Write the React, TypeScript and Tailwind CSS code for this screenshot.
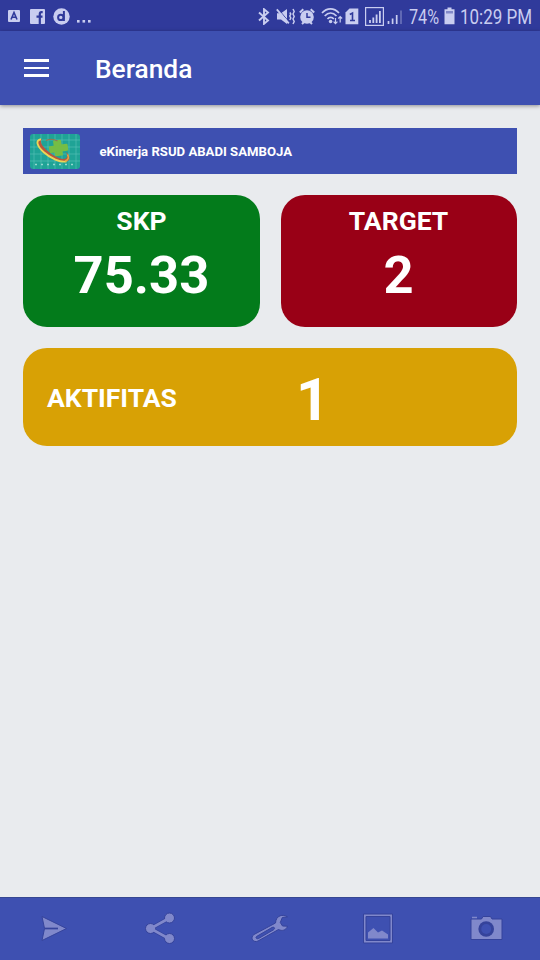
import type { ReactNode } from "react";

interface StatCardProps {
  title: string;
  value: string;
  className: string;
}

function StatCard({ title, value, className }: StatCardProps) {
  return (
    <div
      className={`flex h-[132px] flex-1 flex-col items-center rounded-[24px] pt-[10px] font-bold text-white ${className}`}
    >
      <h2 className="text-[26.5px] leading-[32px]">{title}</h2>
      <p className="mt-[6px] text-[52.5px] leading-[64px]">{value}</p>
    </div>
  );
}

function StatusBar() {
  return (
    <div className="flex h-[31px] shrink-0 items-center bg-[#303a9b] pl-2 pt-px text-[#c9cdf0]">
      {/* Notifications */}
      <svg width="12" height="14" viewBox="0 0 12 14" className="shrink-0">
        <rect y="1" width="12" height="12" rx="1" fill="currentColor" />
        <path d="M3 10.5 6 3.5l3 7M4.2 8.3h3.6" fill="none" stroke="#303a9b" strokeWidth="1.6" />
      </svg>
      <svg width="15" height="15" viewBox="0 0 15 15" className="ml-[10px] shrink-0">
        <rect width="15" height="15" rx="1" fill="currentColor" />
        <path d="M12.7 3.2h-1.2c-1.2 0-1.7.6-1.7 1.8V15M6.5 7.6h6" fill="none" stroke="#303a9b" strokeWidth="2.2" />
      </svg>
      <svg width="17" height="17" viewBox="0 0 17 17" className="ml-2 shrink-0">
        <circle cx="8.5" cy="8.5" r="8.2" fill="currentColor" />
        <circle cx="7.8" cy="9.4" r="2.7" fill="none" stroke="#303a9b" strokeWidth="2" />
        <path d="M10.9 3v10" stroke="#303a9b" strokeWidth="2" />
      </svg>
      <svg width="15" height="14" viewBox="0 0 15 14" className="ml-[6px] shrink-0" fill="currentColor">
        <rect x="1" y="11" width="2.6" height="2.6" />
        <rect x="6.5" y="11" width="2.6" height="2.6" />
        <rect x="12" y="11" width="2.6" height="2.6" />
      </svg>

      {/* Bluetooth */}
      <svg width="12" height="17" viewBox="0 0 12 17" className="ml-[167px] shrink-0">
        <path d="m1 4.5 9 8-4 3.3V1.2l4 3.3-9 8" fill="none" stroke="currentColor" strokeWidth="1.9" />
      </svg>
      {/* Vibrate */}
      <svg width="19" height="17" viewBox="0 0 19 17" className="ml-[6px] shrink-0">
        <path d="M1 5.2h4L11 1v15l-6-4.5H1z" fill="currentColor" />
        <path d="m2 .8 11 13" stroke="#303a9b" strokeWidth="1" />
        <path d="m.8 1.3 12 14" stroke="currentColor" strokeWidth="1.8" />
        <path
          d="m13.8 4.5 1 1.5-1 2 1 2-1 2M17 1l1.2 2.5L17 6l1.2 2.5L17 11l1.2 2.5L17 16"
          fill="none"
          stroke="currentColor"
          strokeWidth="1.5"
        />
      </svg>
      {/* Alarm */}
      <svg width="16" height="17" viewBox="0 0 16 17" className="ml-1 shrink-0">
        <path d="M.8 4.5 4.3 1.3M15.2 4.5l-3.500-3.200M3 16l2-2m8 2-2-2" stroke="currentColor" strokeWidth="2" />
        <circle cx="8" cy="9" r="6.8" fill="currentColor" />
        <path d="M8 5v4.3h3.5" fill="none" stroke="#303a9b" strokeWidth="1.5" />
      </svg>
      {/* Wifi */}
      <svg width="22" height="18" viewBox="0 0 22 18" className="ml-[6px] shrink-0">
        <g fill="none" stroke="currentColor" strokeWidth="1.7">
          <path d="M1 6c5-5.600 12-5.600 17 0M3.700 9c3.600-4 8.200-4 11.800 0M6.500 12c1.800-2.300 4.500-2.300 6.300 0" />
        </g>
        <circle cx="9.600" cy="14.500" r="1.800" fill="currentColor" />
        <path
          d="M14.500 11v5.500m-1.900-1.900 1.900 2 1.900-2M19.200 15.500V9.500m-1.900 2 1.900-2 1.900 2"
          fill="none"
          stroke="currentColor"
          strokeWidth="1.2"
        />
      </svg>
      {/* SIM */}
      <svg width="14" height="17" viewBox="0 0 14 17" className="ml-[2px] shrink-0">
        <path d="M4.500.5h8.800v15.800H.500V4.500z" fill="currentColor" />
        <path d="M4.800 6.500 7.500 5v8M5 12.500h5" fill="none" stroke="#303a9b" strokeWidth="1.6" />
      </svg>
      {/* Signal strength */}
      <svg width="19" height="19" viewBox="0 0 19 19" className="ml-[6px] shrink-0">
        <rect x=".6" y=".6" width="17.8" height="17.8" fill="none" stroke="currentColor" strokeWidth="1.2" />
        <path d="M5 13v3M8.300 10.500V16M11.600 7.500V16M14.900 4v12" stroke="currentColor" strokeWidth="1.8" />
      </svg>
      <svg width="16" height="17" viewBox="0 0 16 17" className="ml-[3px] shrink-0">
        <path d="M1.500 13v3M5.600 10.500V16M9.700 7v9" stroke="currentColor" strokeWidth="1.7" />
        <path d="M14 2.500V16" stroke="#7078bd" strokeWidth="1.5" />
      </svg>

      <span className="ml-[6px] w-[31px] shrink-0 whitespace-nowrap pt-[2px] text-[20px] leading-none">
        <span className="inline-block origin-left scale-x-[0.81]">74%</span>
      </span>
      <svg width="11" height="18" viewBox="0 0 11 18" className="ml-[4px] shrink-0">
        <path d="M3.500.500h4v1.700h3v15H.500v-15h3z" fill="currentColor" />
        <path d="M2 4h7v2.500H2z" fill="#8289c8" />
      </svg>
      <span className="ml-[5px] w-[72px] shrink-0 whitespace-nowrap pt-[2px] text-[20px] leading-none">
        <span className="inline-block origin-left scale-x-[0.85]">10:29 PM</span>
      </span>
    </div>
  );
}

function HospitalLogo() {
  return (
    <svg width="50" height="35" viewBox="0 0 50 35">
      <defs>
        <clipPath id="logo-frame">
          <rect width="50" height="35" rx="3" />
        </clipPath>
      </defs>
      <g clipPath="url(#logo-frame)">
        <rect width="50" height="35" fill="#1fa396" />
        <path
          d="M4 0v35M11 0v35M18 0v35M25 0v35M32 0v35M39 0v35M46 0v35M0 6h50M0 13h50M0 20h50M0 27h50"
          stroke="#5cc5bb"
          strokeWidth=".6"
        />
        <path
          d="M25 7h6v5h6v5h-6v4h-6v-4h-5v-5h5z"
          fill="#75bd45"
          stroke="#75bd45"
          strokeWidth="2"
          strokeLinejoin="round"
          transform="rotate(-8 28 14)"
        />
        <path d="M16 6.500c4-1.500 8-1.300 11.500.500" fill="none" stroke="#8c7954" strokeWidth="1.3" />
        {/* Orbit around the cross */}
        <path
          d="M12 5C5 5 6 11 13 18s18 11.500 24 9.500c4-1.500 3-6-1-9.500 2 4 1.500 7-2.500 7C28 25 19 19 14.500 14 11 10 10 7 12 5z"
          fill="#b9553b"
        />
        <path
          d="M11 5.200C5 6 7 12 13.500 18S31 29 36.500 27.300"
          fill="none"
          stroke="#ead657"
          strokeWidth="1.9"
        />
        <path d="M35 27c4-1 4-4 2.500-6.500" fill="none" stroke="#e0a745" strokeWidth="1.5" />
        <path d="M5 30.500h40" stroke="#94d8d0" strokeWidth="1.5" strokeDasharray="2 4" />
      </g>
    </svg>
  );
}

function NavButton({ label, children }: { label: string; children: ReactNode }) {
  return (
    <button aria-label={label} className="flex flex-1 items-center justify-center">
      <svg
        width="34"
        height="34"
        viewBox="0 0 34 34"
        fill="#8088cb"
        stroke="#35439b"
        strokeWidth="1"
        className="overflow-visible"
      >
        {children}
      </svg>
    </button>
  );
}

export default function App() {
  return (
    <div className="flex h-screen flex-col overflow-hidden bg-[#e9ebee] font-[Roboto,sans-serif]">
      <StatusBar />

      <header className="flex h-[74px] shrink-0 items-center bg-[#3e50b1] pl-6 shadow-[0_1px_4px_rgba(0,0,0,0.4)]">
        <button aria-label="Menu" className="flex flex-col gap-[5px]">
          <span className="h-[2.5px] w-[25px] bg-white" />
          <span className="h-[2.5px] w-[25px] bg-white" />
          <span className="h-[2.5px] w-[25px] bg-white" />
        </button>
        <h1 className="ml-[46px] mt-[3px] text-[26.3px] font-medium leading-none text-white">Beranda</h1>
      </header>

      <main className="flex flex-1 flex-col px-[23.4px] pt-[23.4px]">
        <div className="flex h-[46px] items-center bg-[#3e50b1] pl-[6.6px]">
          <HospitalLogo />
          <p className="ml-[19.5px] text-[13.15px] font-bold text-white">eKinerja RSUD ABADI SAMBOJA</p>
        </div>

        <div className="mt-[21px] flex gap-[21px]">
          <StatCard title="SKP" value="75.33" className="bg-[#037b1b]" />
          <StatCard title="TARGET" value="2" className="bg-[#990016]" />
        </div>

        <div className="mt-[21px] flex h-[98px] items-center rounded-[24px] bg-[#d8a105] pl-[23.6px] font-bold text-white">
          <h2 className="w-[249px] pt-[1px] text-[26.5px] leading-[32px]">AKTIFITAS</h2>
          <p className="pt-[6px] text-[58.5px] leading-[64px]">1</p>
        </div>
      </main>

      {/* Bottom navigation */}
      <nav className="flex h-[63px] shrink-0 border-t border-[#364792] bg-[#3e50b1]">
        <NavButton label="Kirim">
          <path d="M5 4.500 29.500 16.500 5 28.500 7.500 16.500z" />
          <path d="M7.500 16.500H21" stroke="#35439b" strokeWidth="1.7" />
        </NavButton>
        <NavButton label="Bagikan">
          <path d="M24.500 6 5.500 16.500l19 10.500" fill="none" stroke="#35439b" strokeWidth="4.2" />
          <circle cx="24.5" cy="6" r="5" />
          <circle cx="5.5" cy="16.5" r="5" />
          <circle cx="24.5" cy="26.5" r="5" />
          <path d="M24.500 6 5.500 16.500l19 10.500" fill="none" stroke="#8088cb" strokeWidth="2.6" />
        </NavButton>
        <NavButton label="Pengaturan">
          <path
            fillRule="evenodd"
            d="M34.500 4.800C30 2 23 3 22.500 11L1 22.500c-4.500 3-.500 9 4 6.500l20.500-11.500c3.500 1.800 7.500 1 9-3.300l-5-.200-2.200-3.500 2-5zM3.500 24.500 19 15.500c2.500-1 3.500 1 1.500 2.300L5.500 26.500c-2 .8-3.200-.8-2-2z"
          />
        </NavButton>
        <NavButton label="Galeri">
          <path fillRule="evenodd" d="M2.500 2h29v29h-29zM5 4.500v24h24v-24z" />
          <path d="M7 26.500v-6l5.500-4.500 4.500 4.500 4-2 6 4v4z" stroke="none" />
        </NavButton>
        <NavButton label="Kamera">
          <path d="M2 7h10.500l1.500-2.500h7.500L23 7h10v20.500H2z" />
          <path d="M3 5.500h5" stroke="#8088cb" strokeWidth="1.5" />
          <circle cx="17.2" cy="17" r="7.800" fill="#35439b" stroke="none" />
          <circle cx="17.2" cy="17" r="5" fill="#3e50b1" stroke="none" />
        </NavButton>
      </nav>
    </div>
  );
}
